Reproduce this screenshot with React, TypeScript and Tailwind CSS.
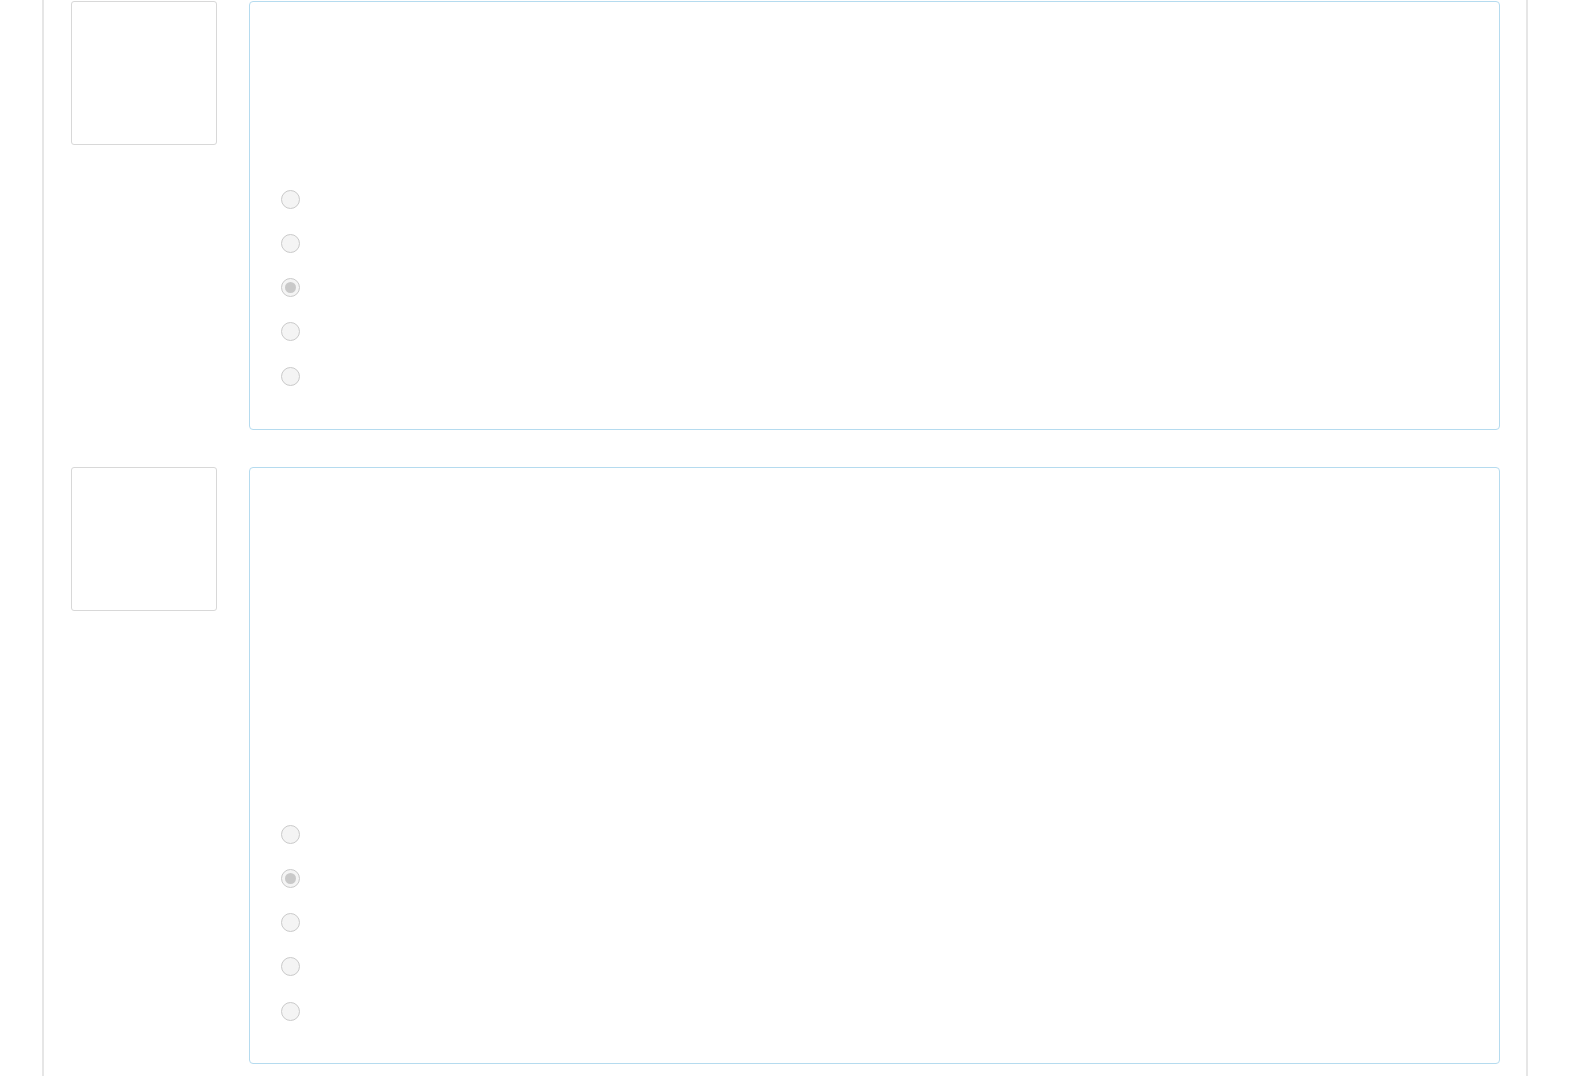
import React from 'react';

function Radio({ checked = false }: { checked?: boolean }) {
  return (
    <div className="flex h-[44.25px] items-center">
      <span className="flex h-[19px] w-[19px] items-center justify-center rounded-full border-[1.5px] border-[#cacaca] bg-[#f4f4f4]">
        {checked && <span className="h-[11px] w-[11px] rounded-full bg-[#c9c9c9]" />}
      </span>
    </div>
  );
}

function Question({ top, checked, height }: { top: number; checked: number; height: string }) {
  return (
    <div className="flex gap-[32px]">
      <div className="h-[144px] w-[146px] shrink-0 rounded-[3px] border-[1.5px] border-[#d8d8d8] bg-white" />
      <div className={`flex flex-1 flex-col rounded-[4px] border-[1.5px] border-[#b5dbef] bg-white pl-[31px] ${height}`}>
        <div style={{ height: top }} />
        <div className="flex flex-col">
          {[0, 1, 2, 3, 4].map((i) => (
            <Radio key={i} checked={i === checked} />
          ))}
        </div>
      </div>
    </div>
  );
}

export default function App() {
  return (
    <div className="min-h-screen bg-white font-['Liberation_Sans',sans-serif]">
      <div className="ml-[42px] mr-[42px] flex h-[1076px] flex-col gap-[37px] overflow-hidden border-x-2 border-[#e6e6e6] px-[27px] pr-[26px] pt-[1px]">
        <Question top={175} checked={2} height="h-[429px]" />
        <Question top={344} checked={1} height="h-[597px]" />
      </div>
    </div>
  );
}
